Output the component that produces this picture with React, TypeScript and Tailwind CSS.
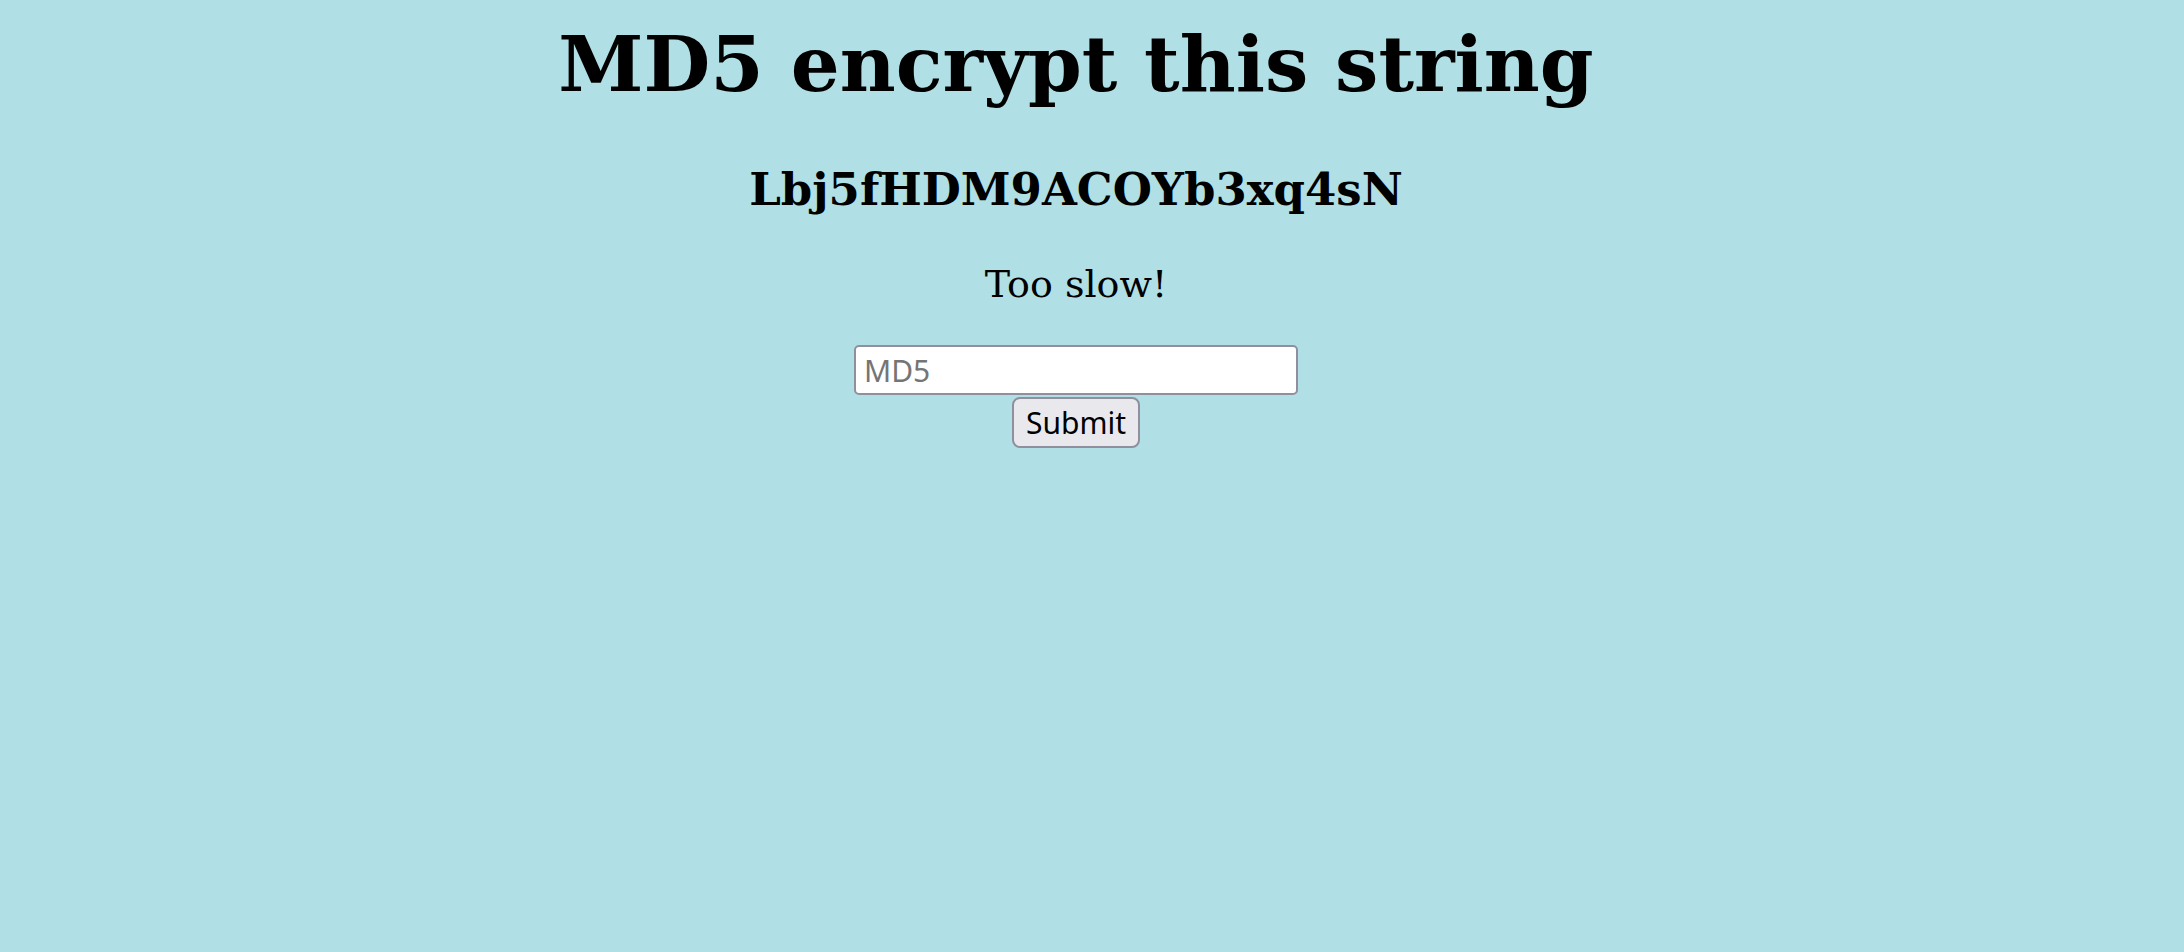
export default function App() {
  return (
    <div className="min-h-[952px] w-full bg-[#b0e0e6] pr-[32px] flex flex-col items-center font-['DejaVu_Serif',serif] text-black">
      <h1 className="mt-[20px] text-[77px] font-bold leading-[1.164]">
        MD5 encrypt this string
      </h1>
      <h3 className="mt-[54px] text-[45px] font-bold leading-[1.164]">
        Lbj5fHDM9ACOYb3xq4sN
      </h3>
      <p className="mt-[46px] text-[38px] leading-[1.164]">
        Too slow!
      </p>
      <form className="mt-[39px] flex flex-col items-center font-['Noto_Sans',sans-serif]">
        <input
          type="text"
          placeholder="MD5"
          className="w-[444px] h-[50px] bg-white border-2 border-[#8f8f9d] rounded-[5px] px-[8px] text-[30px] text-black placeholder:text-[#757575] outline-none"
        />
        <button
          type="button"
          className="mt-[2px] w-[128px] h-[51px] bg-[#e9e9ed] border-2 border-[#8f8f9d] rounded-[8px] text-[30px] text-black"
        >
          Submit
        </button>
      </form>
    </div>
  );
}
